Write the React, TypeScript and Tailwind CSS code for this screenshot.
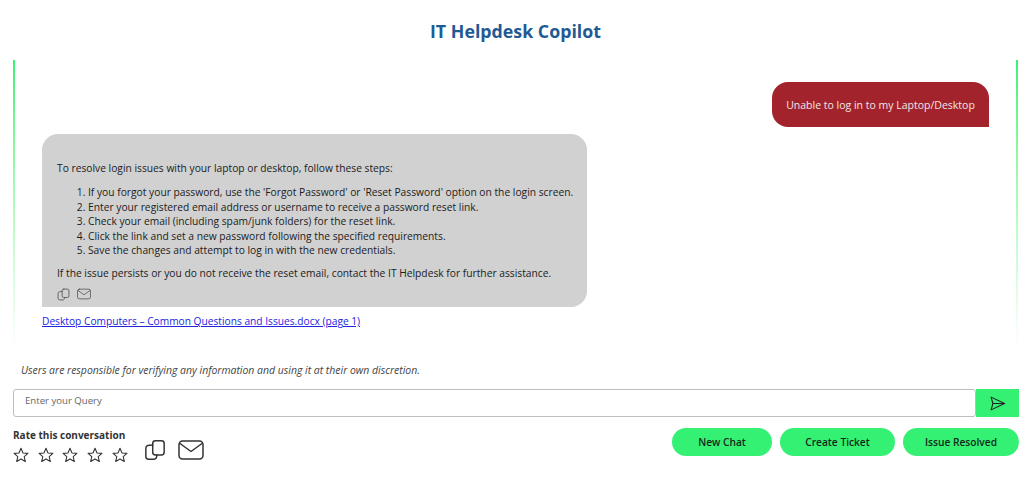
import React from 'react';

const steps = [
  "If you forgot your password, use the 'Forgot Password' or 'Reset Password' option on the login screen.",
  'Enter your registered email address or username to receive a password reset link.',
  'Check your email (including spam/junk folders) for the reset link.',
  'Click the link and set a new password following the specified requirements.',
  'Save the changes and attempt to log in with the new credentials.',
];

const CopyIcon = ({ className }: { className: string }) => (
  <svg viewBox="0 0 24 24" fill="none" stroke="currentColor" strokeWidth="1.6" strokeLinecap="round" strokeLinejoin="round" className={className}>
    <rect x="9.5" y="2" width="12.5" height="15.5" rx="3" />
    <path d="M9.5 6.500C5 6.500 2 7 2 10v9c0 2 1.500 3 3 3h6c2 0 3-1.500 3-4.500" />
  </svg>
);

const MailIcon = ({ className }: { className: string }) => (
  <svg viewBox="0 0 26 20" fill="none" stroke="currentColor" strokeWidth="1.5" strokeLinecap="round" strokeLinejoin="round" className={className}>
    <rect x="1" y="1" width="24" height="18" rx="3.500" />
    <path d="M2 3.500l11 8 11-8" />
  </svg>
);

const StarIcon = () => (
  <svg viewBox="0 0 24 24" fill="none" stroke="currentColor" strokeWidth="1.6" strokeLinejoin="round" className="w-[16px] h-[16px] text-[#333]">
    <path d="M12 2l3 6.900 7.400.7-5.600 4.900 1.700 7.300-6.500-3.900-6.500 3.900 1.700-7.300L1.600 9.600 9 8.900z" />
  </svg>
);

const SendIcon = () => (
  <svg viewBox="0 0 24 24" fill="none" stroke="currentColor" strokeWidth="1.500" strokeLinejoin="round" className="w-[17px] h-[17px] text-[#222]">
    <path d="M3 3l19 9-19 9 2.500-9z" />
    <path d="M5.500 12H22" />
  </svg>
);

const SideLine = () => (
  <div className="w-[2px] shrink-0 bg-gradient-to-b from-[#34f174] to-white" />
);

const App: React.FC = () => {
  return (
    <div className="w-[1024px] h-[480px] bg-white overflow-hidden font-['Open_Sans',sans-serif] text-[#222]">
      <h1 className="h-[60px] pt-[18px] pl-[7px] text-center text-[17.800px] leading-[26px] font-bold text-[#1f5a93]">IT Helpdesk Copilot</h1>

      {/* Chat */}
      <div className="flex h-[290px] ml-[13px] mr-[6px]">
        <SideLine />
        <div className="flex-1 pl-[27px] pr-[27px] pt-[22px]">
          <div className="flex justify-end">
            <div className="w-[217px] h-[45px] pt-[2px] flex items-center justify-center bg-[#a3232c] text-[#f0e6e6] text-[10.500px] rounded-[16px] rounded-br-none">
              Unable to log in to my Laptop/Desktop
            </div>
          </div>

          <div className="w-[545px] h-[173px] mt-[7px] bg-[#d1d1d1] rounded-[16px] rounded-bl-none pl-[15px] pt-[27px] text-[10.250px] leading-[14.400px] text-[#1c1c1c]">
            <p>To resolve login issues with your laptop or desktop, follow these steps:</p>
            <ol className="list-decimal pl-[31px] mt-[10px]">
              {steps.map((step) => (
                <li key={step}>{step}</li>
              ))}
            </ol>
            <p className="mt-[9px]">If the issue persists or you do not receive the reset email, contact the IT Helpdesk for further assistance.</p>
            <div className="flex items-center gap-[7px] mt-[7px] text-[#555]">
              <CopyIcon className="w-[13px] h-[13px]" />
              <MailIcon className="w-[14px] h-[12px]" />
            </div>
          </div>

          <a href="#" className="block mt-[7px] text-[10.200px] leading-[15px] text-[#2323e0] underline">
            Desktop Computers – Common Questions and Issues.docx (page 1)
          </a>
        </div>
        <SideLine />
      </div>

      <p className="pl-[21px] mt-[13px] text-[10.450px] leading-[14px] italic text-[#444]">
        Users are responsible for verifying any information and using it at their own discretion.
      </p>

      {/* Query input */}
      <div className="flex h-[28px] mt-[12px] ml-[13px] mr-[5px]">
        <input
          placeholder="Enter your Query"
          className="flex-1 min-w-0 border border-[#bdbdbd] rounded-[3px] pl-[11px] pb-[3px] text-[9.600px] bg-white outline-none placeholder:text-[#666]"
        />
        <button className="w-[43px] flex items-center justify-center bg-[#34f174]">
          <SendIcon />
        </button>
      </div>

      {/* Footer */}
      <div className="flex justify-between mt-[11px] ml-[13px] mr-[5px]">
        <div className="flex items-start">
          <div>
            <p className="text-[10px] leading-[14px] font-bold text-[#333]">Rate this conversation</p>
            <div className="flex gap-[8.700px] mt-[5px]">
              {[1, 2, 3, 4, 5].map((n) => (
                <StarIcon key={n} />
              ))}
            </div>
          </div>
          <div className="flex items-center gap-[12px] ml-[16px] mt-[11px] text-[#333]">
            <CopyIcon className="w-[22px] h-[22px]" />
            <MailIcon className="w-[26px] h-[20px]" />
          </div>
        </div>
        <div className="flex gap-[8px] h-[28px] text-[10.200px] font-semibold text-[#14281b]">
          <button className="w-[100px] pt-[1px] rounded-full bg-[#34f174]">New Chat</button>
          <button className="w-[115px] pt-[1px] rounded-full bg-[#34f174]">Create Ticket</button>
          <button className="w-[116px] pt-[1px] rounded-full bg-[#34f174]">Issue Resolved</button>
        </div>
      </div>
    </div>
  );
};

export default App;
